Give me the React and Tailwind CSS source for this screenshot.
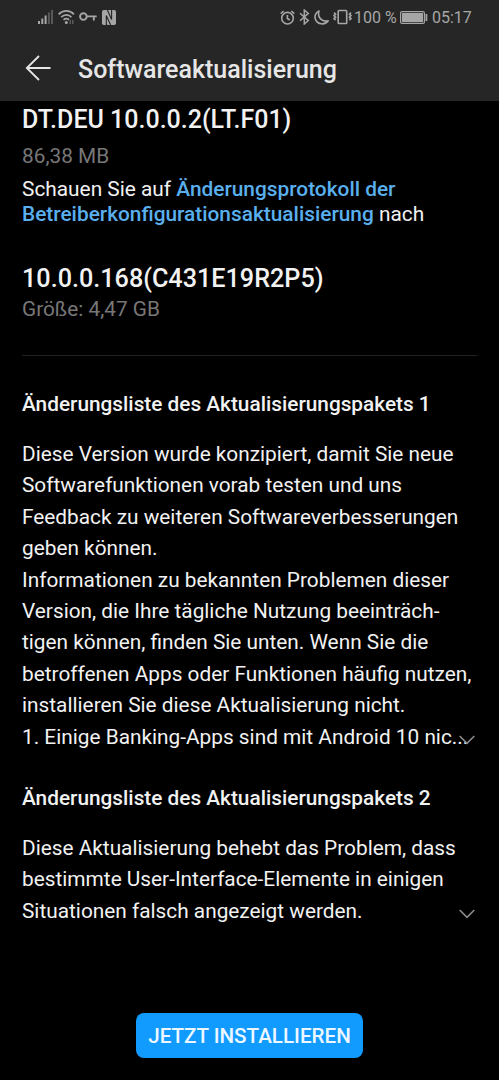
const FIRST_LINES = [
  'Diese Version wurde konzipiert, damit Sie neue',
  'Softwarefunktionen vorab testen und uns',
  'Feedback zu weiteren Softwareverbesserungen',
  'geben können.',
  'Informationen zu bekannten Problemen dieser',
  'Version, die Ihre tägliche Nutzung beeinträch-',
  'tigen können, finden Sie unten. Wenn Sie die',
  'betroffenen Apps oder Funktionen häufig nutzen,',
  'installieren Sie diese Aktualisierung nicht.',
  '1. Einige Banking-Apps sind mit Android 10 nic...',
];

const SECOND_LINES = [
  'Diese Aktualisierung behebt das Problem, dass',
  'bestimmte User-Interface-Elemente in einigen',
  'Situationen falsch angezeigt werden.',
];

function SignalIcon() {
  return (
    <svg width="16" height="16" viewBox="0 0 16 16" fill="currentColor">
      <rect x="0" y="12" width="2" height="3" />
      <rect x="3.3" y="9.5" width="2" height="5.5" />
      <rect x="6.6" y="6.5" width="2" height="8.5" />
      <rect x="9.9" y="3.5" width="2" height="11.5" opacity="0.4" />
      <rect x="13" y="1" width="2" height="14" opacity="0.4" />
    </svg>
  );
}

function WifiIcon() {
  return (
    <svg width="17" height="16" viewBox="0 0 17 16" fill="none" stroke="currentColor" strokeWidth="1.7">
      <path d="M.7 5.4C5 .8 11.7.8 16 5.4" />
      <path d="M3.2 8.2c3-3.2 7.4-3.2 10.3 0" />
      <path d="M5.6 10.9c1.6-1.6 3.8-1.6 5.4 0" />
      <circle cx="8.3" cy="13.4" r="1.5" fill="currentColor" stroke="none" />
      <path d="M12.2 11v4M14.8 11v4" strokeWidth="1" opacity="0.6" />
    </svg>
  );
}

function KeyIcon() {
  return (
    <svg width="18" height="10" viewBox="0 0 18 10" fill="none" stroke="currentColor" strokeWidth="1.9">
      <circle cx="4.4" cy="4.6" r="3.3" />
      <path d="M7.7 4.4h10M14.8 4.4v4" />
    </svg>
  );
}

function NfcIcon() {
  return (
    <svg width="14" height="15" viewBox="0 0 14 15" fill="none">
      <rect width="14" height="15" rx="1.8" fill="currentColor" />
      <path d="M5.6 15H4.300V5.500M5.400 0l4.200 9.500V0M4.300 5.500L8.600 15" stroke="#262626" strokeWidth="1.1" />
    </svg>
  );
}

function AlarmIcon() {
  return (
    <svg width="15" height="15" viewBox="0 0 15 15" fill="none" stroke="currentColor" strokeWidth="1.6">
      <circle cx="7.5" cy="8.2" r="5.8" />
      <path d="M.7 3.6L3.7 1M14.3 3.6L11.3 1M7.4 5v3.5l2.4 1.5" />
    </svg>
  );
}

function BluetoothIcon() {
  return (
    <svg width="11" height="16" viewBox="0 0 11 16" fill="none" stroke="currentColor" strokeWidth="1.5">
      <path d="M1 4.2l8.3 7.4-4 3.4V1l4 3.4L1 11.8" />
    </svg>
  );
}

function MoonIcon() {
  return (
    <svg width="15" height="15" viewBox="0 0 15 15" fill="none" stroke="currentColor" strokeWidth="1.6" strokeLinejoin="round">
      <path d="M5 1C1.6 2.5.1 6.3 1.6 9.6c1.9 4.7 9.3 6 12.6 1.2C8 12.3 3 7.5 5 1z" />
    </svg>
  );
}

function VibrateIcon() {
  return (
    <svg width="19" height="16" viewBox="0 0 19 16" fill="none" stroke="currentColor" strokeWidth="1.6">
      <rect x="5.2" y="1.5" width="8.5" height="13" rx="0.8" />
      <path d="M1 3.7l1.6 1.5L1 6.7l1.6 1.5L1 9.7l1.6 1.5M18 3.7l-1.6 1.5L18 6.7l-1.6 1.5L18 9.7l-1.6 1.5" />
    </svg>
  );
}

function BatteryIcon() {
  return (
    <svg width="28" height="13" viewBox="0 0 28 13" fill="none">
      <rect x="0.6" y="0.6" width="23.8" height="11.8" rx="1.5" stroke="currentColor" strokeWidth="1.2" />
      <rect x="2" y="2" width="21" height="9" fill="currentColor" />
      <rect x="25.5" y="3" width="1.8" height="7" fill="currentColor" />
    </svg>
  );
}

function Chevron() {
  return (
    <svg width="16" height="10" viewBox="0 0 16 10" fill="none" stroke="#8c8c8c" strokeWidth="1.6">
      <path d="M.7 1l7.3 7.3L15.3 1" />
    </svg>
  );
}

function StatusBar() {
  return (
    <div className="flex h-9 justify-between pl-[38px] pr-7 text-[#a6a6a6]">
      <div className="flex h-[34px] items-center">
        <SignalIcon />
        <div className="ml-[4px] flex"><WifiIcon /></div>
        <div className="ml-[4px] flex"><KeyIcon /></div>
        <div className="ml-[5px] flex"><NfcIcon /></div>
      </div>
      <div className="flex h-[34px] items-center">
        <AlarmIcon />
        <div className="ml-[4px] flex"><BluetoothIcon /></div>
        <div className="ml-[4px] flex"><MoonIcon /></div>
        <div className="ml-[4px] flex"><VibrateIcon /></div>
        <span className="ml-[2px] mt-px w-[46px] whitespace-nowrap text-base">100 %</span>
        <BatteryIcon />
        <span className="ml-[4px] mt-px w-[39px] whitespace-nowrap text-base">05:17</span>
      </div>
    </div>
  );
}

function ChangeList({ title, lines }) {
  return (
    <section>
      <h2 className="h-8 whitespace-nowrap text-[20.8px] font-medium leading-8">{title}</h2>
      <div className="relative mt-[19px] text-[20.82px] leading-[31.4px]">
        {lines.map((line) => (
          <p key={line} className="whitespace-nowrap">{line}</p>
        ))}
        <div className="absolute bottom-[8px] right-[2px]"><Chevron /></div>
      </div>
    </section>
  );
}

export default function App() {
  return (
    <div className="flex h-[1080px] w-[499px] flex-col overflow-hidden bg-black font-[Roboto,sans-serif] text-[#f2f2f2]">
      <header className="h-[101px] shrink-0 bg-[#262626]">
        <StatusBar />
        <div className="flex h-16 items-center pl-[25px] text-[#e6e6e6]">
          <svg width="27" height="26" viewBox="0 0 27 26" fill="none" stroke="currentColor" strokeWidth="1.8">
            <path d="M14 1L1.8 13 14 25M2 13h23.5" />
          </svg>
          <h1 className="ml-[26px] mt-[3px] whitespace-nowrap text-[25px] font-medium">Softwareaktualisierung</h1>
        </div>
      </header>

      <main className="px-[22px] pt-px">
        <h2 className="h-9 whitespace-nowrap text-[25px] font-medium leading-9">DT.DEU 10.0.0.2(LT.F01)</h2>
        <p className="h-9 text-[20.8px] leading-9 text-[#777]">86,38 MB</p>
        <p className="mt-[3px] whitespace-nowrap text-[20.85px] leading-[25px]">
          Schauen Sie auf <span className="font-medium text-[#5ab0ee]">Änderungsprotokoll der</span>
          <br />
          <span className="font-medium text-[#5ab0ee]">Betreiberkonfigurationsaktualisierung</span> nach
        </p>
        <h2 className="mt-[34px] h-9 whitespace-nowrap text-[25.2px] font-medium leading-9">10.0.0.168(C431E19R2P5)</h2>
        <p className="h-7 text-[20.8px] leading-[25px] text-[#777]">Größe: 4,47 GB</p>
        <div className="mb-[32px] mt-[30px] h-px bg-[#222]" />
        <ChangeList title="Änderungsliste des Aktualisierungspakets 1" lines={FIRST_LINES} />
        <div className="h-[29px]" />
        <ChangeList title="Änderungsliste des Aktualisierungspakets 2" lines={SECOND_LINES} />
      </main>

      <button className="mb-[22px] ml-[136px] mt-auto h-[45px] w-[227px] shrink-0 whitespace-nowrap rounded-lg bg-[#129bff] pt-[2px] text-[20.6px] font-medium text-[#edf7ff]">
        JETZT INSTALLIEREN
      </button>
    </div>
  );
}
